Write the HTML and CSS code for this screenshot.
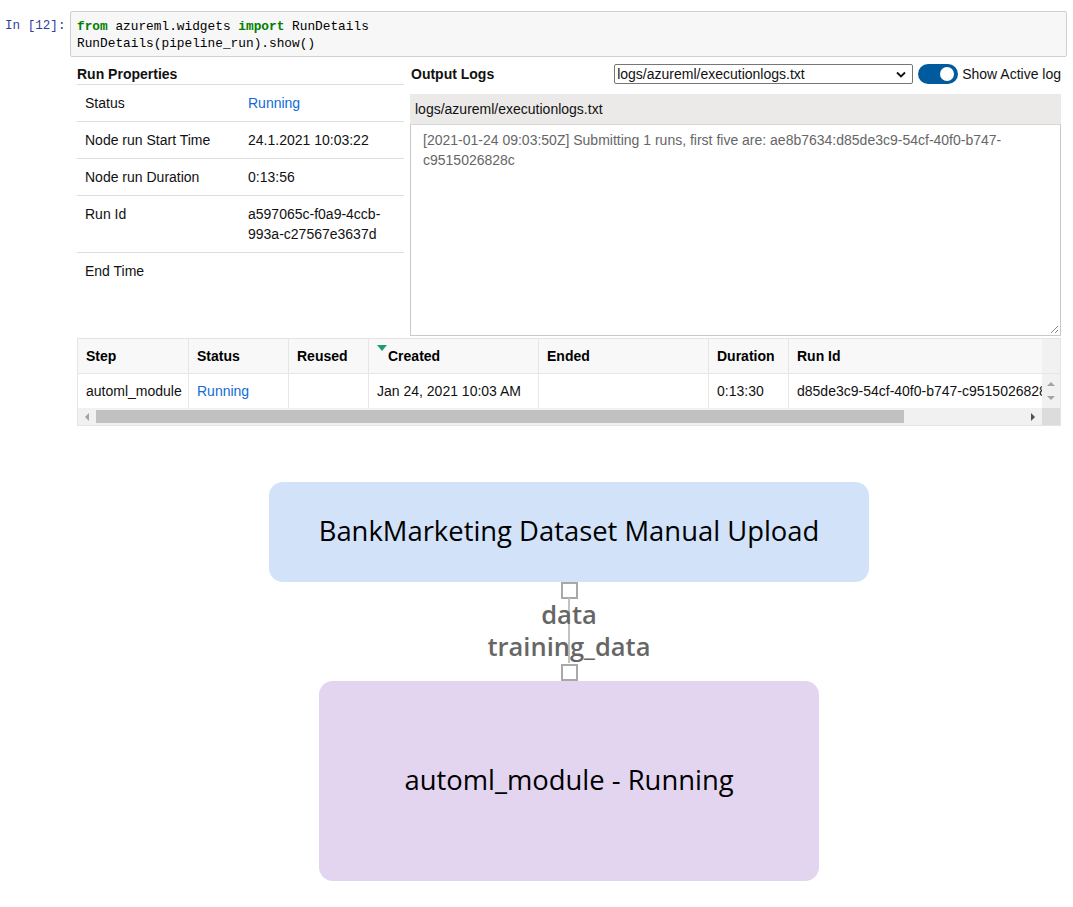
FILE: index.html
```html
<!DOCTYPE html>
<html>
<head>
<meta charset="utf-8">
<link rel="stylesheet" href="styles.css">
</head>
<body>
<div class="cell">
  <div class="prompt">In [12]:</div>
  <pre class="code"><span class="kw">from</span> azureml.widgets <span class="kw">import</span> RunDetails
RunDetails(pipeline_run).show()</pre>
</div>

<div class="output">
  <div class="top">
    <div class="props">
      <div class="props-head">Run Properties</div>
      <div class="prop-row"><div class="pl">Status</div><div class="pv link">Running</div></div>
      <div class="prop-row"><div class="pl">Node run Start Time</div><div class="pv">24.1.2021 10:03:22</div></div>
      <div class="prop-row"><div class="pl">Node run Duration</div><div class="pv">0:13:56</div></div>
      <div class="prop-row"><div class="pl">Run Id</div><div class="pv">a597065c-f0a9-4ccb-993a-c27567e3637d</div></div>
      <div class="prop-row last"><div class="pl">End Time</div><div class="pv"></div></div>
    </div>
    <div class="logs">
      <div class="logs-head">
        <div class="logs-title">Output Logs</div>
        <div class="select">
          <span>logs/azureml/executionlogs.txt</span>
          <svg class="chev" width="10" height="7" viewBox="0 0 10 7"><polyline points="1,1.5 5,5.5 9,1.5" fill="none" stroke="#111" stroke-width="1.8"/></svg>
        </div>
        <div class="toggle"><div class="knob"></div></div>
        <div class="toggle-label">Show Active log</div>
      </div>
      <div class="log-file">logs/azureml/executionlogs.txt</div>
      <div class="log-box">[2021-01-24 09:03:50Z] Submitting 1 runs, first five are: ae8b7634:d85de3c9-54cf-40f0-b747-c9515026828c
        <svg class="grip" width="9" height="9" viewBox="0 0 9 9"><line x1="1" y1="8" x2="8" y2="1" stroke="#888" stroke-width="1"/><line x1="5" y1="8" x2="8" y2="5" stroke="#888" stroke-width="1"/></svg>
      </div>
    </div>
  </div>

  <div class="steps">
    <div class="grid">
      <div class="th">Step</div>
      <div class="th">Status</div>
      <div class="th">Reused</div>
      <div class="th"><span class="sort"></span>Created</div>
      <div class="th">Ended</div>
      <div class="th">Duration</div>
      <div class="th">Run Id</div>
      <div class="vs-head"></div>

      <div class="td">automl_module</div>
      <div class="td link">Running</div>
      <div class="td"></div>
      <div class="td">Jan 24, 2021 10:03 AM</div>
      <div class="td"></div>
      <div class="td">0:13:30</div>
      <div class="td clip">d85de3c9-54cf-40f0-b747-c9515026828c</div>
      <div class="vs">
        <span class="arr up"></span>
        <span class="arr down"></span>
      </div>
    </div>
    <div class="hscroll">
      <div class="hbtn"><span class="arr left"></span></div>
      <div class="track"><div class="thumb"></div></div>
      <div class="hbtn"><span class="arr right"></span></div>
      <div class="corner"></div>
    </div>
  </div>

  <div class="graph">
    <div class="node node-data">BankMarketing Dataset Manual Upload</div>
    <div class="port"></div>
    <div class="edge">
      <div class="edge-label">data</div>
      <div class="edge-label">training_data</div>
    </div>
    <div class="port"></div>
    <div class="node node-step">automl_module - Running</div>
  </div>
</div>
</body>
</html>
```

FILE: styles.css
```css
* { box-sizing: border-box; }

body {
  margin: 0;
  background: #fff;
  font-family: "Liberation Sans", Arial, sans-serif;
  font-size: 14px;
  color: #111;
}

.cell {
  display: flex;
  padding: 11px 6px 0 5px;
}

.prompt {
  width: 65px;
  flex: none;
  padding-top: 7px;
  font-family: "Liberation Mono", "DejaVu Sans Mono", monospace;
  font-size: 12.6px;
  line-height: 17px;
  color: #303f9f;
}

.code {
  flex: 1;
  margin: 0;
  padding: 6px 6px 4px;
  background: #f7f7f7;
  border: 1px solid #cfcfcf;
  border-radius: 2px;
  font-family: "Liberation Mono", "DejaVu Sans Mono", monospace;
  font-size: 12.8px;
  line-height: 17px;
  color: #000;
}

.kw { color: #008000; font-weight: bold; }

.output {
  margin: 7px 12px 0 77px;
}

.top {
  display: flex;
  gap: 6px;
}

.props {
  width: 327px;
  flex: none;
}

.props-head {
  height: 21px;
  line-height: 20px;
  font-weight: bold;
  border-bottom: 1px solid #dedede;
}

.prop-row {
  display: grid;
  grid-template-columns: 163px 1fr;
  border-bottom: 1px solid #dedede;
}

.prop-row.last { border-bottom: none; }

.pl, .pv {
  padding: 8px;
  line-height: 20px;
}

.link { color: #0f6cd6; }

.logs {
  flex: 1;
  min-width: 0;
}

.logs-head {
  height: 20px;
  display: flex;
  align-items: center;
}

.logs-title {
  font-weight: bold;
  padding-left: 1px;
}

.select {
  margin-left: auto;
  width: 299px;
  height: 20px;
  border: 1px solid #767676;
  border-radius: 2px;
  display: flex;
  align-items: center;
  justify-content: space-between;
  padding: 0 6px 0 2px;
  font-size: 14px;
}

.chev { flex: none; }

.toggle {
  width: 40px;
  height: 20px;
  margin-left: 5px;
  border-radius: 10px;
  background: #005a9e;
  display: flex;
  align-items: center;
  justify-content: flex-end;
  padding: 0 4px;
}

.knob {
  width: 14px;
  height: 14px;
  border-radius: 50%;
  background: #fff;
}

.toggle-label {
  margin-left: 4px;
  white-space: nowrap;
}

.log-file {
  margin-top: 10px;
  height: 30px;
  line-height: 30px;
  padding-left: 5px;
  background: #ebeae9;
}

.log-box {
  position: relative;
  height: 212px;
  border: 1px solid #c9c9c9;
  border-top-color: #d6d6d6;
  padding: 5px 12px;
  line-height: 20px;
  color: #666;
}

.grip {
  position: absolute;
  right: 1px;
  bottom: 1px;
}

.steps {
  margin-top: 2px;
  border: 1px solid #e4e4e4;
}

.grid {
  display: grid;
  grid-template-columns: 111px 100px 80px 170px 170px 80px 253px 18px;
}

.th, .td {
  height: 35px;
  padding: 0 8px;
  display: flex;
  align-items: center;
  border-right: 1px solid #e6e6e6;
  white-space: nowrap;
  overflow: hidden;
}

.th {
  height: 35px;
  background: #f8f8f8;
  font-weight: bold;
  border-bottom: 1px solid #e6e6e6;
  color: #000;
}

.td { height: 34px; }

.grid > .th:nth-child(7), .grid > .td.clip { border-right: none; }

.clip { overflow: hidden; }

.sort {
  align-self: flex-start;
  margin-top: 6px;
  width: 0;
  height: 0;
  border-left: 5px solid transparent;
  border-right: 5px solid transparent;
  border-top: 6px solid #1f9e6c;
  margin-right: 1px;
}

.vs-head {
  background: #f1f1f1;
  border-bottom: 1px solid #e6e6e6;
}

.vs {
  background: #f1f1f1;
  display: flex;
  flex-direction: column;
  align-items: center;
  justify-content: center;
  gap: 10px;
}

.arr {
  display: block;
  width: 0;
  height: 0;
}

.arr.up {
  border-left: 4px solid transparent;
  border-right: 4px solid transparent;
  border-bottom: 4px solid #a3a3a3;
}

.arr.down {
  border-left: 4px solid transparent;
  border-right: 4px solid transparent;
  border-top: 4px solid #a3a3a3;
}

.arr.left {
  border-top: 4px solid transparent;
  border-bottom: 4px solid transparent;
  border-right: 4px solid #a3a3a3;
}

.arr.right {
  border-top: 4px solid transparent;
  border-bottom: 4px solid transparent;
  border-left: 4px solid #505050;
}

.hscroll {
  display: flex;
  height: 17px;
  background: #f1f1f1;
}

.hbtn {
  width: 18px;
  flex: none;
  display: flex;
  align-items: center;
  justify-content: center;
}

.track {
  flex: 1;
  padding: 2px 0;
}

.thumb {
  width: 808px;
  height: 100%;
  background: #c1c1c1;
}

.corner {
  width: 18px;
  flex: none;
  background: #dcdcdc;
}

.graph {
  margin-top: 56px;
  display: flex;
  flex-direction: column;
  align-items: center;
  font-family: "Open Sans", "Noto Sans", sans-serif;
  padding-bottom: 25px;
}

.node {
  display: flex;
  align-items: center;
  justify-content: center;
  border-radius: 14px;
  font-size: 27.4px;
  color: #000;
}

.node-data {
  width: 600px;
  height: 100px;
  background: #d2e2f8;
  padding-bottom: 4px;
}

.node-step {
  width: 500px;
  height: 200px;
  background: #e3d5ef;
  padding-bottom: 4px;
}

.port {
  width: 17px;
  height: 17px;
  border: 2px solid #a9a9a9;
  background: #fff;
}

.edge {
  height: 65px;
  width: 300px;
  margin-top: -1px;
  margin-bottom: 1px;
  background: linear-gradient(#c2c2c2, #c2c2c2) center / 2px 100% no-repeat;
  display: flex;
  flex-direction: column;
  align-items: center;
}

.edge-label {
  font-size: 25.5px;
  line-height: 32px;
  font-weight: 600;
  color: #666;
}
```
